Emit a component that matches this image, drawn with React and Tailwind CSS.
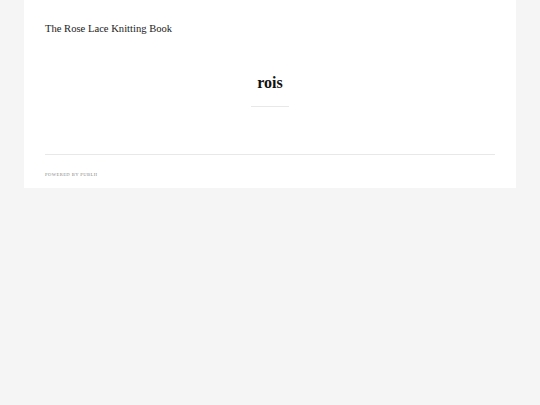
export default function App() {
  return (
    <div className="min-h-[405px] bg-[#f5f5f5]" style={{ fontFamily: '"Liberation Serif", serif' }}>
      <div className="mx-[24px] w-[492px] bg-white px-[21px]">
        {/* Header */}
        <header className="pt-[22px] pb-[37px]">
          <div className="text-[10.6px] leading-[14px] text-[#222]">The Rose Lace Knitting Book</div>
        </header>

        {/* Title */}
        <div className="flex flex-col items-center">
          <h1 className="text-[16px] leading-[20px] font-bold text-[#111]">rois</h1>
          <div className="mt-[13px] h-px w-[38px] bg-[#e8e8e8]" />
        </div>

        {/* Footer */}
        <footer className="mt-[47px] border-t border-[#e8e8e8] pt-[17px] pb-[10px]">
          <div className="text-[4.6px] leading-[6px] tracking-[0.09em] uppercase text-[#888]">
            Powered by Publii
          </div>
        </footer>
      </div>
    </div>
  );
}
